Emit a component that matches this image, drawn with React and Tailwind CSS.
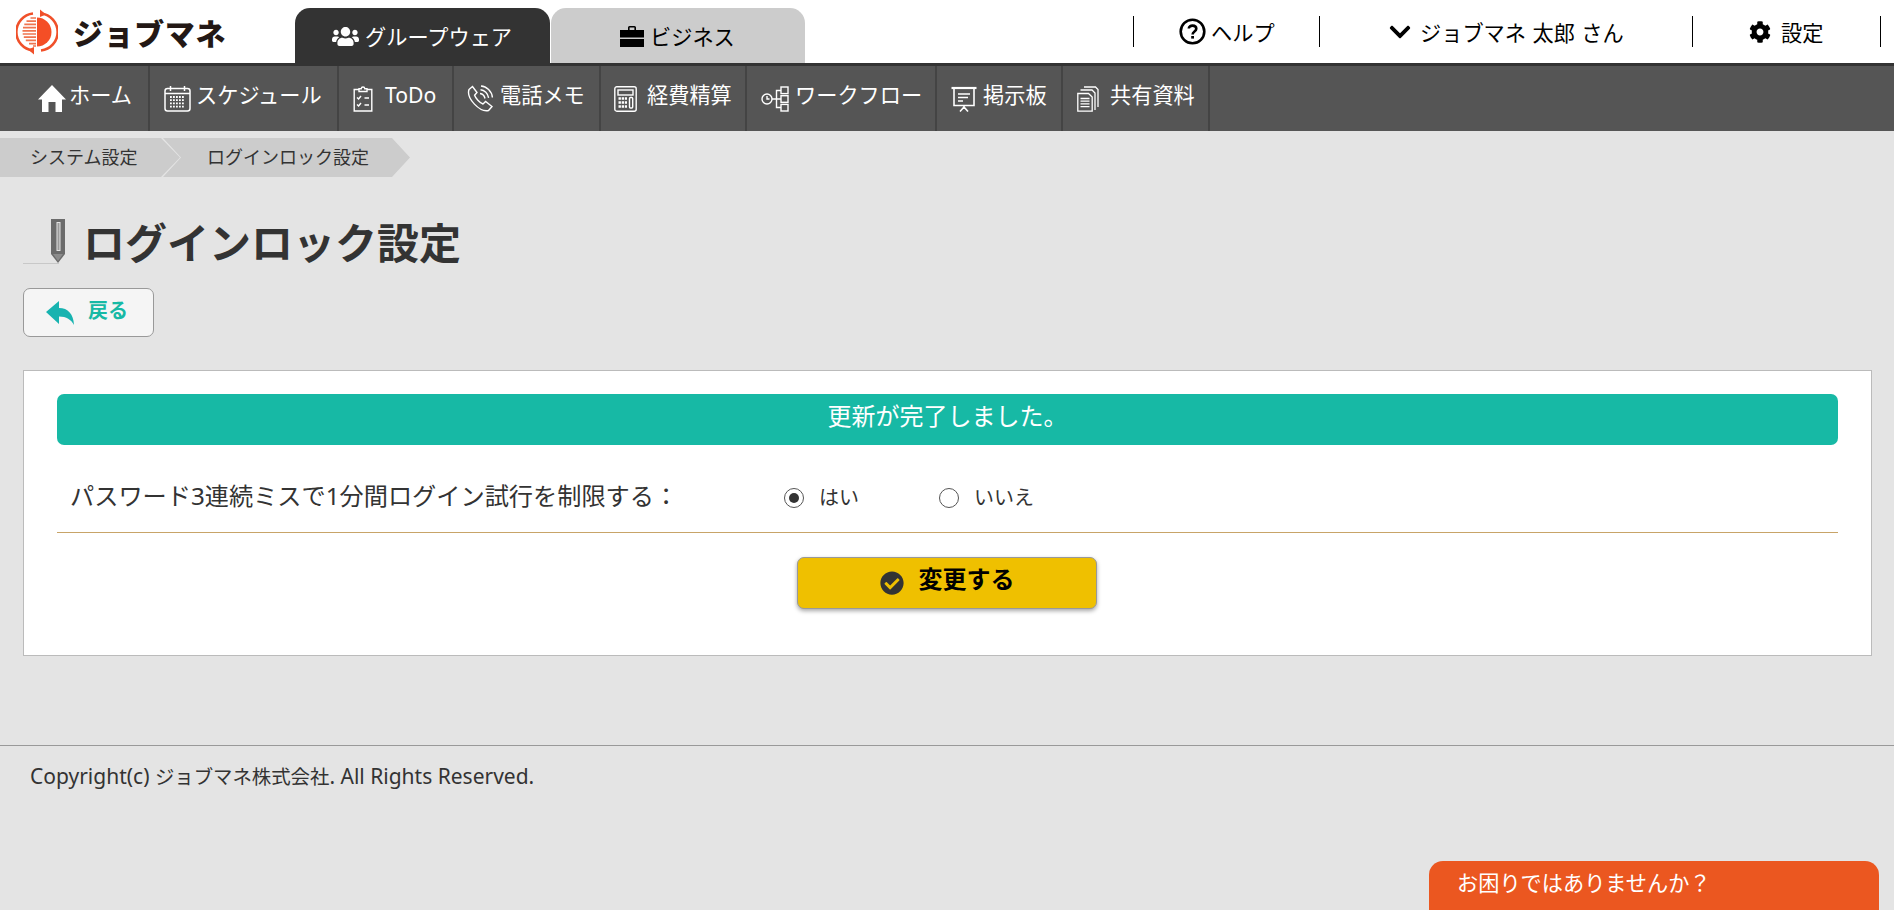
import React from "react";
import { FaUsers, FaChevronDown, FaCog, FaCheckCircle } from "react-icons/fa";

// ** Icons drawn by hand
const Logo = () => (
  <svg width="42" height="46" viewBox="0 0 42 46" fill="none">
    <path d="M17 4.5A18.6 18.6 0 0 0 17 41.5" stroke="#f0502a" strokeWidth="2.6" />
    <path d="M25 4.5A18.6 18.6 0 0 1 25 41.5" stroke="#f0502a" strokeWidth="2.6" />
    <path d="M24 0.5V8L30 5.5Z" fill="#f0502a" />
    <path d="M18 45.5V38L12 40.5Z" fill="#f0502a" />
    <path d="M21 8.5A14.5 14.5 0 0 1 21 37.5Z" fill="#f44e26" />
    <path
      d="M20 9H14.5M20 12.2H10.5M20 15.4H8.3M20 18.6H7M20 21.8H6.5M20 25H6.7M20 28.2H7.8M20 31.4H9.8M20 34.6H13M20 37H17"
      stroke="#f0744f"
      strokeWidth="1.7"
    />
  </svg>
);

const HomeIcon = () => (
  <svg width="28" height="27" viewBox="0 0 28 27" fill="#fff">
    <path d="M14 0L28 14.5H24V27H17.5V17H10.5V27H4V14.5H0Z" />
  </svg>
);

const Briefcase = () => (
  <svg width="24" height="24" viewBox="0 0 24 24" fill="#000">
    <path d="M8 6V3.5Q8 2 9.5 2H14.5Q16 2 16 3.5V6H14.4V3.6H9.6V6Z" />
    <rect x="0" y="6" width="24" height="7.5" />
    <rect x="0" y="15" width="24" height="8" />
  </svg>
);

const HelpCircle = () => (
  <svg width="27" height="27" viewBox="0 0 27 27" fill="none" stroke="#000">
    <circle cx="13.5" cy="13.5" r="11.8" strokeWidth="2.6" />
    <path d="M9.8 10.6C9.8 6.6 17.3 6.6 17.3 10.8C17.3 13.6 13.6 13.4 13.6 16.4" strokeWidth="2.6" />
    <path d="M13.6 18V20.6" strokeWidth="2.8" />
  </svg>
);

const CalendarIcon = () => (
  <svg width="27" height="27" viewBox="0 0 27 27" fill="none" stroke="#fff" strokeWidth="1.5">
    <rect x="1" y="3.5" width="25" height="22.5" rx="2.5" />
    <path d="M1 8.5H26M6.5 1V6M20.5 1V6" />
    <path
      d="M6 12H21M6 15.2H21M6 18.4H21M6 21.6H21"
      strokeWidth="1.8"
      strokeDasharray="1.8 1.2"
    />
  </svg>
);

const TodoIcon = () => (
  <svg width="20" height="26" viewBox="0 0 20 26" fill="none" stroke="#fff" strokeWidth="1.4">
    <path d="M6 3.5H1.2V25H18.8V3.5H14" />
    <path d="M6 5.5V2.8H8.2C8.4 0.4 11.6 0.4 11.8 2.8H14V5.5Z" />
    <path d="M4 11.5L5.6 13L8 10M11.5 12H16M4 18.5L5.6 20L8 17M11.5 19H16" />
  </svg>
);

const PhoneIcon = () => (
  <svg width="27" height="27" viewBox="0 0 27 27" fill="none" stroke="#fff" strokeWidth="1.4">
    <path d="M2 4.5L5.5 1.5L10 7.5L7.6 10.2C8.5 13 12.6 17.8 16 19L18.6 16.4L25 21.5L21.5 25.5C13 27.5 -1 13.5 2 4.5Z" />
    <path d="M13 8.5C15.5 8.8 17.5 11 18 13.5M13.5 4.8C17.5 5 21 8.5 21.6 12.8M14 1C19.5 1.2 25 6.5 25.4 12.5" />
  </svg>
);

const CalcIcon = () => (
  <svg width="23" height="26" viewBox="0 0 23 26" fill="none" stroke="#fff" strokeWidth="1.4">
    <rect x="0.8" y="0.8" width="21.4" height="24.4" rx="2" />
    <rect x="4" y="4" width="15" height="5" />
    <path
      d="M4.5 12.5H13M4.5 16.5H13M4.5 20.5H13"
      strokeWidth="2.6"
      strokeDasharray="2.4 0.8"
    />
    <rect x="15.5" y="11.5" width="3.2" height="10.5" rx="1" />
  </svg>
);

const FlowIcon = () => (
  <svg width="28" height="26" viewBox="0 0 28 26" fill="none" stroke="#fff" strokeWidth="1.4">
    <circle cx="6" cy="13" r="5" />
    <path d="M6 10V13H8.5M11 13H15.5V4.5H20M15.5 13H20M15.5 13V21.5H20" />
    <rect x="20" y="1" width="7" height="6.6" />
    <rect x="20" y="9.7" width="7" height="6.6" />
    <rect x="20" y="18.4" width="7" height="6.6" />
  </svg>
);

const BoardIcon = () => (
  <svg width="26" height="26" viewBox="0 0 26 26" fill="none" stroke="#fff" strokeWidth="1.6">
    <path d="M0.5 2H25.5" strokeWidth="2.2" />
    <path d="M3 2.5V19.5H23V2.5" />
    <path d="M7 8H19M7 11.5H17M7 15H12" strokeWidth="1.7" />
    <path d="M13 19.5V22M13 21L9 25.5M13 21L17 25.5" />
  </svg>
);

const DocsIcon = () => (
  <svg width="22" height="26" viewBox="0 0 22 26" fill="none" stroke="#fff" strokeWidth="1.3">
    <path d="M7 1H18.5L21 3.5V21" />
    <path d="M3.5 4H15L18 7V24" />
    <path d="M0.8 7.5H11.5L15.2 11V25.2H0.8Z" />
    <path d="M3.5 12.5H12.5M3.5 15.2H12.5M3.5 17.9H12.5M3.5 20.6H12.5" />
  </svg>
);

const PencilIcon = () => (
  <svg width="42" height="50" viewBox="0 0 42 50" fill="none">
    <path d="M0 44.5H36" stroke="#c8c8c8" strokeWidth="1" />
    <path d="M28 0H42V35L35 44L28 35Z" fill="#6b6b6b" />
    <path d="M33.5 3H37.5V32H33.5Z" fill="#e4e4e4" />
    <path d="M34.5 4H36.5V31H34.5Z" fill="#9a9a9a" />
    <path d="M30 35L35 42L40 35Z" fill="#8c8c8c" />
  </svg>
);

const BackIcon = () => (
  <svg width="28" height="25" viewBox="0 0 28 25" fill="#17b3b0">
    <path d="M0 12L13 1V8C22 8 27.5 14 28 25C25 19.5 20.5 16.5 13 16.5V24Z" />
  </svg>
);

const NavItem = ({ width, icon, label, gap }) => (
  <a className={`flex h-full shrink-0 items-center border-r-2 border-[#444] ${width}`}>
    <span className={`flex items-center ${gap}`}>
      {icon}
      <span className="relative -top-[4px] text-[21.2px] leading-none text-white">{label}</span>
    </span>
  </a>
);

const App = () => {
  return (
    <div className="flex min-h-screen flex-col overflow-hidden bg-[#e4e4e4] font-['Noto_Sans','Noto_Sans_CJK_JP',sans-serif] text-[#333]">
      {/* Header */}
      <header className="flex h-[63px] bg-white">
        <div className="flex w-[295px] shrink-0 items-center pl-4">
          <Logo />
          <span className="ml-[15px] text-[30px] leading-none font-black tracking-[0.6px] text-[#231815] font-['Noto_Sans_CJK_JP',sans-serif]">
            ジョブマネ
          </span>
        </div>
        <div className="flex items-end">
          <div className="flex h-[55px] w-[255px] items-center rounded-t-[15px] bg-[#333] pl-[37px] text-white">
            <FaUsers className="mt-[2px] text-[27px]" />
            <span className="relative top-px ml-[6px] text-[21.2px] leading-none">グループウェア</span>
          </div>
          <div className="ml-px flex h-[55px] w-[254px] items-center rounded-t-[15px] bg-[#ccc] pl-[69px] text-black">
            <Briefcase />
            <span className="relative top-px ml-[6px] text-[21.2px] leading-none">ビジネス</span>
          </div>
        </div>
        <div className="ml-auto mr-[13px] flex items-center text-black">
          <div className="flex h-[31px] w-[186px] items-center border-l border-black pl-[45px]">
            <HelpCircle />
            <span className="relative top-px ml-[5px] text-[21.2px] leading-none">ヘルプ</span>
          </div>
          <div className="flex h-[31px] w-[373px] items-center border-l border-black pl-[68px]">
            <FaChevronDown className="text-[24px]" />
            <span className="relative top-px ml-[8px] text-[21.2px] leading-none [word-spacing:1px]">ジョブマネ 太郎 さん</span>
          </div>
          <div className="flex h-[31px] w-[189px] items-center border-x border-black pl-[56px]">
            <FaCog className="text-[22px]" />
            <span className="relative top-px ml-[10px] text-[21.2px] leading-none">設定</span>
          </div>
        </div>
      </header>

      {/* Nav */}
      <nav className="flex h-[68px] border-t-[3px] border-[#333] bg-[#555]">
        <NavItem width="w-[150px] pl-[38px]" gap="gap-[3px]" icon={<HomeIcon />} label="ホーム" />
        <NavItem width="w-[189px] pl-[14px]" gap="gap-[5px]" icon={<CalendarIcon />} label="スケジュール" />
        <NavItem width="w-[115px] pl-[14px]" gap="gap-[12px]" icon={<TodoIcon />} label="ToDo" />
        <NavItem width="w-[147px] pl-[13px]" gap="gap-[6px]" icon={<PhoneIcon />} label="電話メモ" />
        <NavItem width="w-[146px] pl-[13px]" gap="gap-[10px]" icon={<CalcIcon />} label="経費精算" />
        <NavItem width="w-[190px] pl-[14px]" gap="gap-[6px]" icon={<FlowIcon />} label="ワークフロー" />
        <NavItem width="w-[126px] pl-[14px]" gap="gap-[6px]" icon={<BoardIcon />} label="掲示板" />
        <NavItem width="w-[147px] pl-[14px]" gap="gap-[11px]" icon={<DocsIcon />} label="共有資料" />
      </nav>

      {/* Breadcrumb */}
      <div className="mt-[7px] flex h-[39px] text-[18px] leading-none text-[#333]">
        <div className="flex h-full w-[180px] items-center bg-[#ccc] pl-[30px] [clip-path:polygon(0_0,161px_0,180px_50%,161px_100%,0_100%)]">
          <span className="relative -top-px">システム設定</span>
        </div>
        <div className="-ml-[17px] flex h-full w-[247px] items-center bg-[#ccc] pl-[44px] [clip-path:polygon(0_0,229px_0,247px_50%,229px_100%,0_100%,18px_50%)]">
          <span className="relative -top-px">ログインロック設定</span>
        </div>
      </div>

      {/* Title */}
      <div className="ml-[23px] mt-[42px] flex h-[50px] items-center">
        <PencilIcon />
        <h1 className="relative -top-px ml-[18px] text-[42px] leading-none font-bold text-[#333]">ログインロック設定</h1>
      </div>

      <button className="ml-[23px] mt-[19px] flex h-[49px] w-[131px] items-center rounded-[7px] border border-[#999] bg-[#f5f5f5] pl-[22px]">
        <BackIcon />
        <span className="relative -top-[2px] ml-[14px] text-[20px] leading-none font-bold text-[#17b9a5]">戻る</span>
      </button>

      {/* Card */}
      <div className="ml-[23px] mr-[22px] mt-[33px] h-[286px] border border-[#bbb] bg-white px-[33px] pt-[23px]">
        <div className="flex h-[51px] items-center justify-center rounded-[7px] bg-[#17b9a5] text-white">
          <span className="relative -top-[4px] text-[24px] leading-none">更新が完了しました。</span>
        </div>
        <div className="flex h-[88px] items-center border-b border-[#c8a468] pl-[13px] pt-[18px]">
          <span className="relative -top-px w-[714px] shrink-0 text-[24.2px] leading-none text-[#333]">
            パスワード3連続ミスで1分間ログイン試行を制限する：
          </span>
          <label className="flex items-center gap-[15px] text-[20px] leading-none">
            <span className="flex size-5 items-center justify-center rounded-full border-[1.5px] border-[#555]">
              <span className="size-[10px] rounded-full bg-[#333]" />
            </span>
            はい
          </label>
          <label className="ml-[80px] flex items-center gap-[15px] text-[20px] leading-none">
            <span className="size-5 rounded-full border-[1.5px] border-[#555]" />
            いいえ
          </label>
        </div>
        <button className="ml-[740px] mt-6 flex h-[52px] w-[300px] items-center justify-center rounded-[7px] border border-[#999] bg-[#efc000] shadow-[0_2px_4px_rgba(0,0,0,0.35)]">
          <FaCheckCircle className="text-[24px] text-[#333]" />
          <span className="relative -top-[4px] ml-[15px] text-[24px] leading-none font-bold text-black">変更する</span>
        </button>
      </div>

      {/* Footer */}
      <footer className="mt-[89px] h-[165px] border-t border-[#999] pl-[30px] pt-[15px] text-[19.4px] text-[#333]">
        <span className="text-[21px]">Copyright(c) </span>
        ジョブマネ株式会社
        <span className="text-[21px]">. All Rights Reserved.</span>
      </footer>

      {/* Help tab */}
      <div className="fixed bottom-0 right-[15px] h-[49px] w-[450px] rounded-t-[14px] bg-[#eb5720] pl-[28px] pt-[7px] text-[21.2px] leading-[30px] text-white">
        お困りではありませんか？
      </div>
    </div>
  );
};

export default App;
